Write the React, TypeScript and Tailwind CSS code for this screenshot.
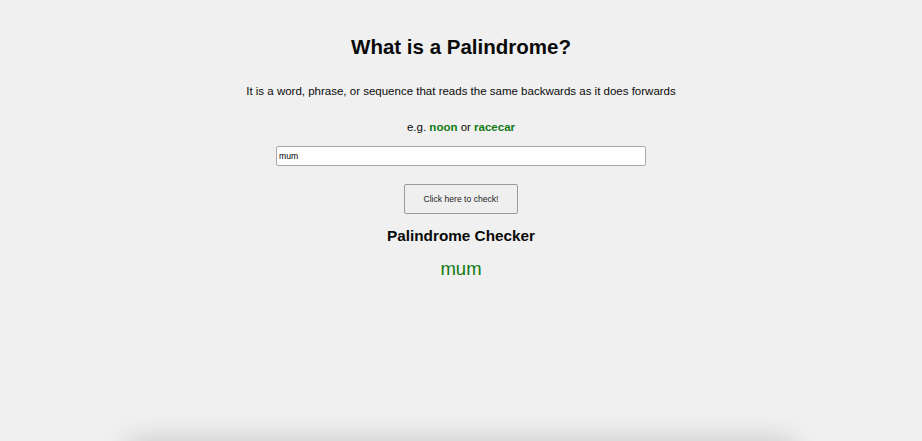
import { useState } from "react";

export default function App() {
  const [word, setWord] = useState("mum");
  const [result, setResult] = useState("mum");

  return (
    <div
      className="relative h-[441px] overflow-hidden bg-[#f0f0f0] text-[#0a0a0a]"
      style={{ fontFamily: '"Liberation Sans", Arial, sans-serif' }}
    >
      <div className="flex flex-col items-center">
        <h1 className="mt-[35px] text-[20.5px] leading-[24px] font-bold">What is a Palindrome?</h1>
        <p className="mt-[25px] text-[11.5px] leading-[14px]">
          It is a word, phrase, or sequence that reads the same backwards as it does forwards
        </p>
        <p className="mt-[22px] text-[11.5px] leading-[14px]">
          e.g. <b className="text-[#137a13]">noon</b> or <b className="text-[#137a13]">racecar</b>
        </p>
        <input
          value={word}
          onChange={(e) => setWord(e.target.value)}
          className="mt-[12px] h-[20px] w-[370px] rounded-[2px] border border-[#a9a9a9] bg-white px-[2px] text-[8.6px] text-black outline-none"
        />
        <button
          onClick={() => setResult(word)}
          className="mt-[18px] h-[30px] w-[114px] rounded-[2px] border border-[#9a9a9a] bg-[#efefef] text-[8.6px] text-[#222]"
        >
          Click here to check!
        </button>
        <h2 className="mt-[13px] text-[15.3px] leading-[18px] font-bold">Palindrome Checker</h2>
        <div className="mt-[13px] text-[18.5px] leading-[22px] text-[#117a11]">{result}</div>
      </div>

      {/* shadow of the next block peeking in below the fold */}
      <div className="absolute top-[441px] left-[128px] h-[60px] w-[666px] bg-[#f0f0f0] shadow-[0_0_28px_rgba(0,0,0,0.18)]" />
    </div>
  );
}
